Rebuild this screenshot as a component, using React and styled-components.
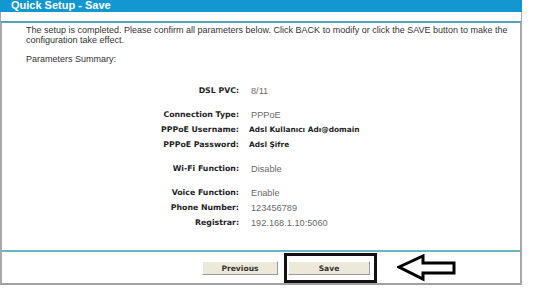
import React from "react";
import styled, { createGlobalStyle } from "styled-components";

const GlobalStyle = createGlobalStyle`
  body {
    margin: 0;
    background: #ffffff;
    font-family: "Liberation Sans", Arial, sans-serif;
  }
`;

const rows = [
  [{ label: "DSL PVC:", value: "8/11" }],
  [
    { label: "Connection Type:", value: "PPPoE" },
    { label: "PPPoE Username:", value: "Adsl Kullanıcı Adı@domain", strong: true },
    { label: "PPPoE Password:", value: "Adsl Şifre", strong: true },
  ],
  [{ label: "Wi-Fi Function:", value: "Disable" }],
  [
    { label: "Voice Function:", value: "Enable" },
    { label: "Phone Number:", value: "123456789" },
    { label: "Registrar:", value: "192.168.1.10:5060" },
  ],
];

export default function App() {
  return (
    <>
      <GlobalStyle />
      <Panel>
        <Header>Quick Setup - Save</Header>
        <Strip />
        <Body>
          <Text>
            The setup is completed. Please confirm all parameters below. Click
            BACK to modify or click the SAVE button to make the configuration
            take effect.
          </Text>
          <Text gap="9px">Parameters Summary:</Text>
          <Params>
            {rows.map((group, i) => (
              <Group key={i}>
                {group.map((r) => (
                  <Row key={r.label}>
                    <Label>{r.label}</Label>
                    <Value strong={r.strong}>{r.value}</Value>
                  </Row>
                ))}
              </Group>
            ))}
          </Params>
        </Body>
        <Footer>
          <Button>Previous</Button>
          <Highlight>
            <Button wide>Save</Button>
          </Highlight>
          <Arrow width="60" height="28" viewBox="0 0 60 28">
            <polygon
              points="2,13 26,2 26,9 57,9 57,19 26,19 26,25"
              fill="#fff"
              stroke="#000"
              strokeWidth="3"
            />
          </Arrow>
        </Footer>
      </Panel>
    </>
  );
}

const Panel = styled.div`
  width: 522px;
  display: flex;
  flex-direction: column;
`;

const Header = styled.div`
  height: 12px;
  background: #1297d0;
  color: #ffffff;
  font-weight: bold;
  font-size: 11px;
  line-height: 10px;
  padding-left: 11px;
  overflow: hidden;
`;

const Strip = styled.div`
  height: 9px;
  background: #ffffff;
  border-left: 1px solid #a8a8a8;
  border-right: 1px solid #a8a8a8;
`;

const Body = styled.div`
  border-top: 2px solid #55a3b8;
  border-left: 2px solid #a8a8a8;
  border-right: 2px solid #a8a8a8;
  padding-top: 2px;
  height: 229px;
  box-sizing: border-box;
  color: #333333;
`;

const Text = styled.p`
  margin: ${(p) => p.gap || "0"} 0 0 24px;
  width: 492px;
  font-size: 9px;
  line-height: 10px;
`;

const Params = styled.div`
  margin-top: 19px;
  display: flex;
  flex-direction: column;
  gap: 9px;
`;

const Group = styled.div`
  display: flex;
  flex-direction: column;
`;

const Row = styled.div`
  display: grid;
  grid-template-columns: 237px 1fr;
  column-gap: 12px;
  height: 15px;
  align-items: center;
`;

const Label = styled.span`
  text-align: right;
  font-family: "DejaVu Sans", Verdana, sans-serif;
  font-weight: bold;
  font-size: 7.8px;
  color: #1e1e1e;
`;

const Value = styled.span`
  font-family: ${(p) =>
    p.strong ? '"DejaVu Sans", Tahoma, sans-serif' : '"Liberation Sans", Arial, sans-serif'};
  font-weight: ${(p) => (p.strong ? "bold" : "normal")};
  font-size: ${(p) => (p.strong ? "7.4px" : "9.2px")};
  color: ${(p) => (p.strong ? "#1e1e1e" : "#6a6a6a")};
  margin-left: ${(p) => (p.strong ? "-2px" : "0")};
`;

const Footer = styled.div`
  border-top: 2px solid #6db4c9;
  border-left: 2px solid #a8a8a8;
  border-right: 2px solid #a8a8a8;
  border-bottom: 2px solid #a0a0a0;
  height: 35px;
  box-sizing: border-box;
  display: flex;
  align-items: center;
  padding-left: 200px;
  padding-top: 1px;
`;

const Button = styled.div`
  width: ${(p) => (p.wide ? "82px" : "76px")};
  height: 14px;
  box-sizing: border-box;
  background: #ece9d8;
  border-top: 1px solid #ffffff;
  border-left: 1px solid #ffffff;
  border-right: 1px solid #9a9a9a;
  border-bottom: 1px solid #9a9a9a;
  display: flex;
  align-items: center;
  justify-content: center;
  font-family: "DejaVu Sans", Tahoma, sans-serif;
  font-weight: bold;
  font-size: 7.6px;
  color: #333333;
`;

const Highlight = styled.div`
  margin-left: 6px;
  width: 93px;
  height: 30px;
  box-sizing: border-box;
  border: 3px solid #111111;
  display: flex;
  align-items: center;
  padding-left: 1px;
`;

const Arrow = styled.svg`
  margin-left: 20px;
  flex-shrink: 0;
`;
